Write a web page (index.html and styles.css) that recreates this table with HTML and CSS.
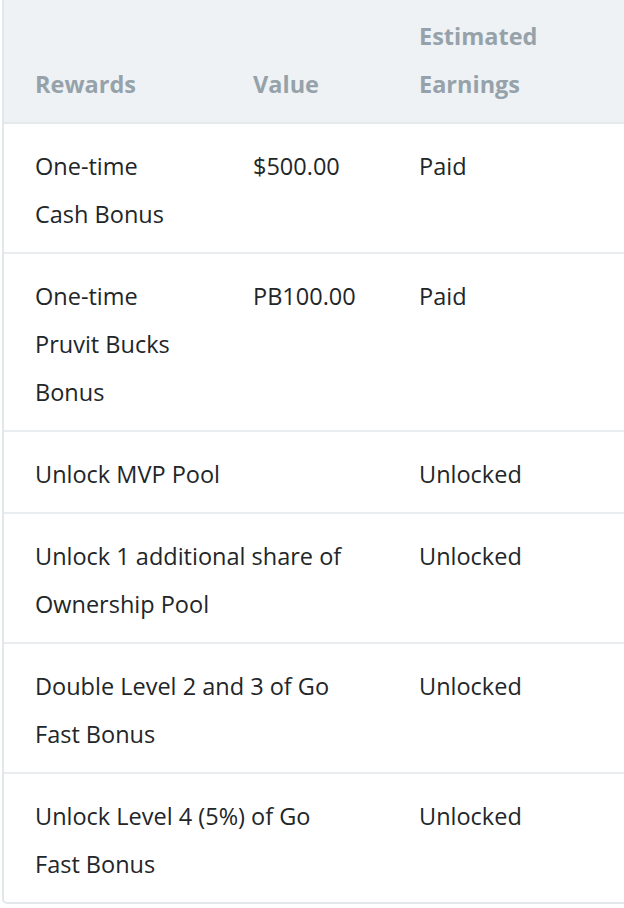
FILE: index.html
```html
<!DOCTYPE html>
<html>
<head>
<meta charset="utf-8">
<link rel="stylesheet" href="styles.css">
</head>
<body>
<div class="card">
  <table class="rewards">
    <colgroup>
      <col class="c1"><col class="c2"><col class="c3">
    </colgroup>
    <thead>
      <tr>
        <th>Rewards</th>
        <th>Value</th>
        <th>Estimated Earnings</th>
      </tr>
    </thead>
    <tbody>
      <tr><td>One-time Cash Bonus</td><td>$500.00</td><td>Paid</td></tr>
      <tr><td>One-time Pruvit Bucks Bonus</td><td>PB100.00</td><td>Paid</td></tr>
      <tr><td class="wide" colspan="2">Unlock MVP Pool</td><td>Unlocked</td></tr>
      <tr><td class="wide" colspan="2">Unlock 1 additional share of Ownership Pool</td><td>Unlocked</td></tr>
      <tr><td class="wide" colspan="2">Double Level 2 and 3 of Go Fast Bonus</td><td>Unlocked</td></tr>
      <tr><td class="wide" colspan="2">Unlock Level 4 (5%) of Go Fast Bonus</td><td>Unlocked</td></tr>
    </tbody>
  </table>
</div>
</body>
</html>
```
FILE: styles.css
```css
html, body {
  margin: 0;
  padding: 0;
  background: #ffffff;
  overflow: hidden;
}
.card {
  margin-left: 2px;
  width: 650px;
  border: 2px solid #e2e7ea;
  border-top: none;
  border-radius: 0 0 0 5px;
  overflow: hidden;
}
.rewards {
  border-collapse: collapse;
  table-layout: fixed;
  width: 650px;
  font-family: "Open Sans", "Noto Sans", sans-serif;
  font-size: 23.5px;
  line-height: 48px;
  color: #222629;
}
.c1 { width: 218px; }
.c2 { width: 166px; }
.c3 { width: 266px; }
.rewards th {
  background: #eef2f5;
  color: #96a2aa;
  font-weight: 700;
  text-align: left;
  vertical-align: bottom;
  padding: 12px 32px 14px 31px;
  border-bottom: 2px solid #e4e9ec;
}
.rewards th:last-child {
  padding-right: 90px;
}
.rewards td {
  text-align: left;
  vertical-align: top;
  padding: 18px 32px 14px 31px;
  border-bottom: 2px solid #e9edef;
}
.rewards td.wide {
  padding-right: 36px;
}
.rewards tbody tr:last-child td {
  border-bottom: none;
}
```
